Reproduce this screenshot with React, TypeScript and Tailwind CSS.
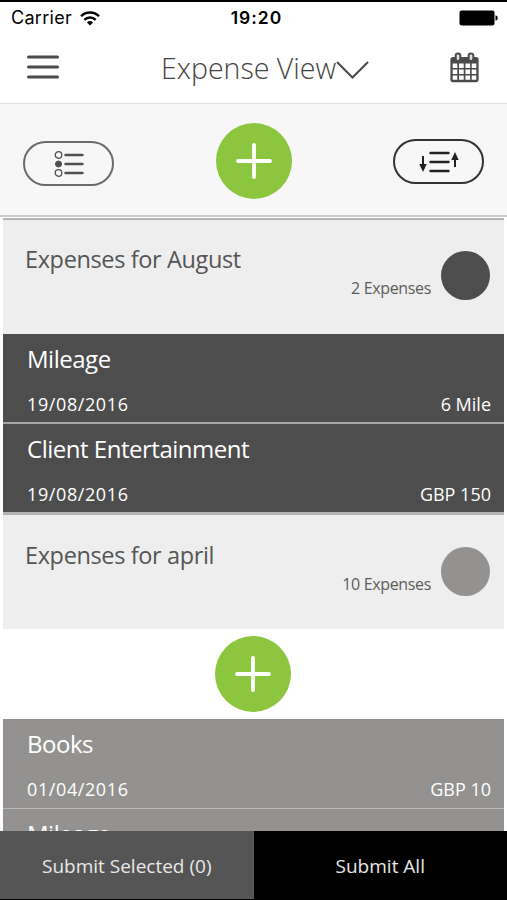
import clsx from 'clsx';

type Expense = { title: string; date?: string; amount?: string };

const AUGUST: Expense[] = [
  { title: 'Mileage', date: '19/08/2016', amount: '6 Mile' },
  { title: 'Client Entertainment', date: '19/08/2016', amount: 'GBP 150' },
];

const APRIL: Expense[] = [
  { title: 'Books', date: '01/04/2016', amount: 'GBP 10' },
  { title: 'Mileage' },
];

function StatusBar() {
  return (
    <div className="grid h-[34px] shrink-0 grid-cols-3 items-center border-t-2 border-black pr-[9px] pl-[11px] font-['Inter',sans-serif] text-black">
      <div className="flex items-center gap-2">
        <span className="text-[18px] leading-6 tracking-[0.3px]">Carrier</span>
        <svg width="20" height="15" viewBox="0 0 20 15" fill="none" stroke="currentColor" strokeWidth="2.3">
          <path d="M1 5.2a12.8 12.8 0 0 1 18 0" />
          <path d="M4.3 8.8a8.2 8.2 0 0 1 11.4 0" />
          <path d="M10 14.6 6.9 11.4a4.5 4.5 0 0 1 6.2 0Z" fill="currentColor" stroke="none" />
        </svg>
      </div>
      <span className="pl-1 text-center text-[17.5px] leading-6 font-semibold tracking-[1px]">19:20</span>
      <svg className="justify-self-end" width="39" height="16" viewBox="0 0 39 16">
        <rect x="0.5" y="0.5" width="35" height="15" rx="2" />
        <path d="M36.5 5.3c3 .8 3 4.6 0 5.4Z" />
      </svg>
    </div>
  );
}

function Header() {
  return (
    <header className="flex h-[69px] shrink-0 items-center justify-between px-[27px] pb-[3px] text-[#4b4b4b]">
      <button aria-label="Menu">
        <svg width="32" height="26" viewBox="0 0 32 26" stroke="currentColor" strokeWidth="3" strokeLinecap="round">
          <path d="M1.5 3h29M1.5 13h29M1.5 23h29" />
        </svg>
      </button>
      <button className="flex items-center pt-0.5 pl-[21px]">
        <span className="text-[28.5px] leading-9 font-light tracking-[0.02px] whitespace-nowrap text-[#444]">Expense View</span>
        <svg className="mt-1" width="33" height="20" viewBox="0 0 33 20" fill="none" stroke="currentColor" strokeWidth="2.1">
          <path d="m1 2 15.5 15.5L32 2" />
        </svg>
      </button>
      <button aria-label="Calendar">
        <svg width="30" height="31" viewBox="0 0 30 31" fill="currentColor">
          <path
            fillRule="evenodd"
            d="M3 5h23a2.6 2.6 0 0 1 2.6 2.6v20a2.6 2.6 0 0 1-2.6 2.6H3A2.6 2.6 0 0 1 .4 27.6V7.600A2.600 2.600 0 0 1 3 5ZM2.700 11.500v4.500h4.600v-4.500Zm6.300 0v4.500h4.700v-4.500Zm6.400 0v4.500h4.700v-4.500Zm6.300 0v4.500h4.600v-4.500ZM2.700 17.500v4.400h4.600v-4.400Zm6.300 0v4.400h4.700v-4.400Zm6.400 0v4.400h4.700v-4.400Zm6.300 0v4.400h4.600v-4.400ZM2.700 23.400v4.400h4.600v-4.400Zm6.300 0v4.400h4.700v-4.400Zm6.400 0v4.400h4.700v-4.400Zm6.300 0v4.400h4.600v-4.400Z"
          />
          <rect x="5.700" y="1.400" width="4.600" height="7.600" rx="2.200" fill="#ddd" stroke="currentColor" strokeWidth="2" />
          <rect x="18.700" y="1.400" width="4.600" height="7.600" rx="2.200" fill="#ddd" stroke="currentColor" strokeWidth="2" />
        </svg>
      </button>
    </header>
  );
}

function AddButton() {
  return (
    <button aria-label="Add expense" className="flex size-[76px] items-center justify-center rounded-full bg-[#8cc63f]">
      <svg width="36" height="36" viewBox="0 0 36 36" stroke="white" strokeWidth="3.8" strokeLinecap="round">
        <path d="M2 18h32M18 2v32" />
      </svg>
    </button>
  );
}

function Toolbar() {
  return (
    <div className="flex h-[114px] shrink-0 items-center justify-between border-t border-b-2 border-t-[#dedede] border-b-[#cbcbcb] bg-[#f7f7f7] px-[23px] pt-0.5">
      <button
        aria-label="Select"
        className="mt-1.5 flex h-[45px] w-[91px] items-center justify-center rounded-full border-2 border-[#6b6b6b] text-[#505050]"
      >
        <svg width="30" height="26" viewBox="0 0 30 26" fill="none" stroke="currentColor">
          <circle cx="4.500" cy="4" r="3.300" strokeWidth="1.300" />
          <circle cx="4.500" cy="13" r="3" fill="currentColor" />
          <circle cx="4.500" cy="22" r="3.300" strokeWidth="1.300" />
          <path d="M11.500 4h17M11.500 13h17M11.500 22h17" strokeWidth="2.400" strokeLinecap="round" />
        </svg>
      </button>
      <AddButton />
      <button
        aria-label="Sort"
        className="mt-0.5 flex h-[45px] w-[91px] items-center justify-center rounded-full border-2 border-[#333] text-[#222]"
      >
        <svg width="40" height="24" viewBox="0 0 40 24" fill="none" stroke="currentColor">
          <path d="M11.500 3h18M11.500 12h18M11.500 21h18" strokeWidth="2.400" strokeLinecap="round" />
          <path d="M4 6v9M36 17V9" strokeWidth="2" />
          <path d="M.300 14h7.400L4 22ZM32.300 10h7.400L36 2Z" fill="currentColor" stroke="none" />
        </svg>
      </button>
    </div>
  );
}

function GroupHeader({ title, count, dot, className }: { title: string; count: string; dot: string; className?: string }) {
  return (
    <div className={clsx('flex shrink-0 justify-between border-[#b3b3b3] bg-[#eee] pr-[14px] pl-[22px] text-[#555]', className)}>
      <h2 className="pt-[23px] text-[23.5px] leading-8 tracking-[-0.37px] whitespace-nowrap">{title}</h2>
      <div className="flex gap-2.5">
        <span className="pt-[58px] text-[16px] leading-5 tracking-[-0.35px] text-[#5c5c5c]">{count}</span>
        <span className={clsx('mt-[31px] size-[49px] rounded-full', dot)} />
      </div>
    </div>
  );
}

function ExpenseRow({ expense, className }: { expense: Expense; className?: string }) {
  return (
    <div className={clsx('shrink-0 pt-[9px] pr-[13px] pl-6 text-white', className)}>
      <h3 className="text-[24px] leading-8 tracking-[-0.48px] whitespace-nowrap">{expense.title}</h3>
      {expense.date && (
        <div className="mt-[17px] flex justify-between text-[18px] leading-6">
          <span className="tracking-[0.6px]">{expense.date}</span>
          <span>{expense.amount}</span>
        </div>
      )}
    </div>
  );
}

export default function App() {
  return (
    <div className="flex h-[900px] w-[507px] flex-col overflow-hidden border-b border-black bg-white font-['Open_Sans',sans-serif]">
      <StatusBar />
      <Header />
      <Toolbar />

      <main className="flex min-h-0 flex-1 flex-col overflow-hidden px-[3px] pt-px">
        <GroupHeader title="Expenses for August" count="2 Expenses" dot="bg-[#4d4d4d]" className="h-[116px] border-t-2" />
        {AUGUST.map((expense, i) => (
          <ExpenseRow
            key={expense.title}
            expense={expense}
            className={clsx('bg-[#4d4d4d]', i === AUGUST.length - 1 ? 'h-[88px]' : 'h-[90px] border-b-2 border-[#a5a5a5]')}
          />
        ))}

        <GroupHeader title="Expenses for april" count="10 Expenses" dot="bg-[#939290]" className="h-[117px] border-t-[3px] pt-px" />
        <div className="flex h-[90px] shrink-0 items-center justify-center pr-0.5">
          <AddButton />
        </div>
        {APRIL.map((expense) => (
          <ExpenseRow key={expense.title} expense={expense} className="h-[90px] border-b border-[#b8b8b8] bg-[#939290]" />
        ))}
      </main>

      {/* Submit actions */}
      <footer className="grid h-[68px] shrink-0 grid-cols-2 text-[19px] text-[#e8e8e8]">
        <button className="bg-[#555] pt-[3px]">Submit Selected (0)</button>
        <button className="bg-black pt-[3px]">Submit All</button>
      </footer>
    </div>
  );
}
